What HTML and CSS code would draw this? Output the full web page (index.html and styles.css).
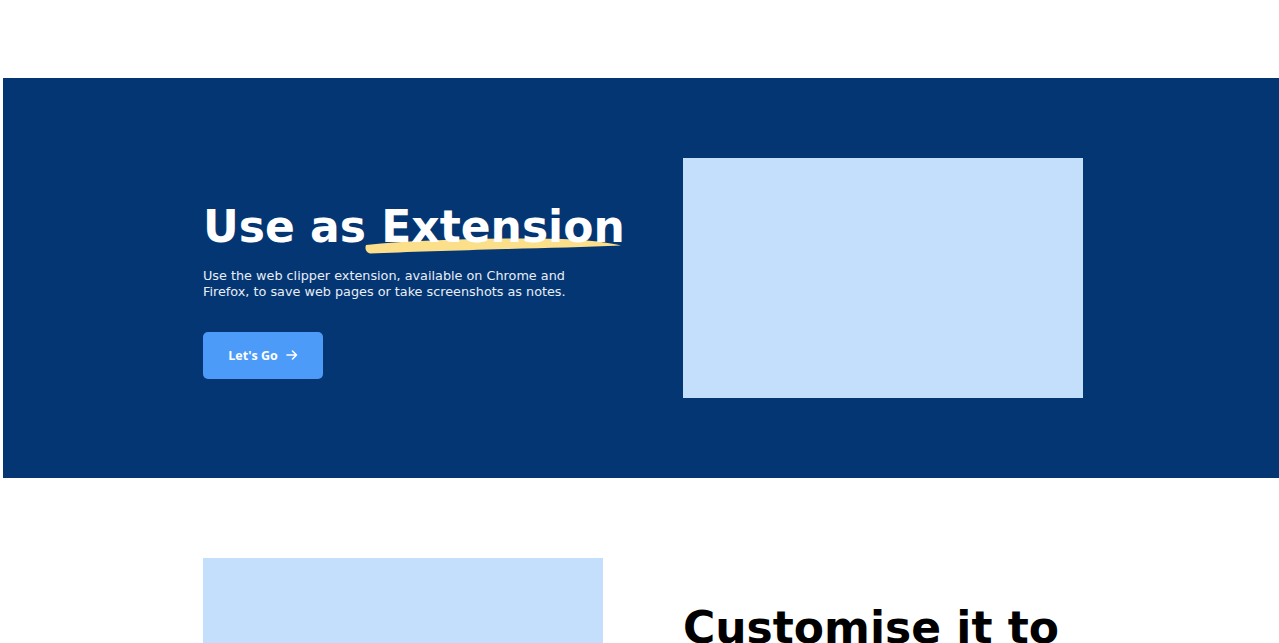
FILE: index.html
```html
<!DOCTYPE html>
<html lang="en">
<head>
<meta charset="utf-8">
<title>Use as Extension</title>
<link rel="stylesheet" href="styles.css">
</head>
<body>
<div class="top-space"></div>
<section class="feature feature-dark">
  <div class="feature-inner">
    <div class="feature-text">
      <h2 class="feature-title">Use as <span class="highlight"><svg class="brush" viewBox="0 0 256 17" preserveAspectRatio="none" aria-hidden="true"><path d="M1 8 C 40 4, 90 2, 140 1.5 C 190 1, 230 2, 255 8.5 C 220 10, 180 11, 140 12 C 90 13.5, 40 15, 5 16.5 C 0 15.5, 0 10, 1 8 Z" fill="#fcdf8b"/></svg><span class="hl-text">Extension</span></span></h2>
      <p class="feature-desc">Use the web clipper extension, available on Chrome and Firefox, to save web pages or take screenshots as notes.</p>
      <a class="btn" href="#">Let's Go <svg class="btn-arrow" viewBox="0 0 12 12" aria-hidden="true"><path d="M1 6 H10.5 M6.5 2 L10.5 6 L6.5 10" fill="none" stroke="#fff" stroke-width="1.6" stroke-linecap="round" stroke-linejoin="round"/></svg></a>
    </div>
    <div class="feature-media"></div>
  </div>
</section>
<section class="feature feature-light">
  <div class="feature-inner top">
    <div class="feature-media"></div>
    <div class="feature-text second">
      <h2 class="feature-title dark">Customise it to your needs</h2>
    </div>
  </div>
</section>
</body>
</html>
```
FILE: styles.css
```css
html, body {
  margin: 0;
  padding: 0;
  background: #ffffff;
  overflow: hidden;
}
body {
  font-family: "DejaVu Sans", sans-serif;
}
.top-space {
  height: 78px;
}
.feature {
  margin-left: 3px;
  padding: 80px 0;
}
.feature-dark {
  background: #043673;
}
.feature-inner {
  display: flex;
  gap: 80px;
  padding-left: 200px;
  align-items: center;
}
.feature-inner.top {
  align-items: flex-start;
}
.feature-text {
  width: 400px;
  flex: none;
  padding-top: 24px;
}
.feature-title {
  margin: 0;
  font-size: 44px;
  font-weight: bold;
  line-height: 1.2;
  color: #ffffff;
  white-space: nowrap;
}
.feature-title.dark {
  color: #000;
  white-space: normal;
}
.highlight {
  position: relative;
  display: inline-block;
}
.brush {
  position: absolute;
  left: -16px;
  top: 36px;
  width: 257px;
  height: 17px;
}
.hl-text {
  position: relative;
}
.feature-desc {
  margin: 14px 0 0;
  font-size: 12.8px;
  line-height: 16px;
  color: #e8eef7;
  width: 370px;
}
.btn {
  margin-top: 32px;
  display: inline-flex;
  align-items: center;
  justify-content: center;
  gap: 8px;
  width: 120px;
  height: 47px;
  border-radius: 5px;
  background: #4d9bf8;
  color: #fff;
  font-family: "Open Sans", sans-serif;
  font-weight: bold;
  font-size: 12.5px;
  text-decoration: none;
}
.btn-arrow {
  width: 12px;
  height: 12px;
}
.feature-media {
  width: 400px;
  height: 240px;
  flex: none;
  background: #c4dffc;
}
.feature-light {
  background: #fff;
}
.feature-text.second {
  padding-top: 44px;
}
```
